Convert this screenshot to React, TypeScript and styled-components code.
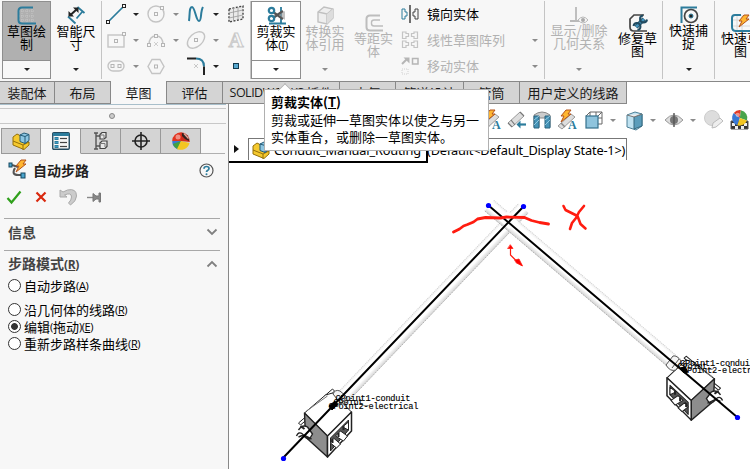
import React from 'react';
import styled, { createGlobalStyle, css } from 'styled-components';

const GlobalStyle = createGlobalStyle`
  * { box-sizing: border-box; }
  html, body { margin: 0; padding: 0; }
  body {
    width: 750px; height: 469px; overflow: hidden; background: #fff; color: #000;
    font: 13px/13px "Noto Sans CJK SC", "Open Sans", sans-serif;
  }
  svg { display: block; overflow: visible; flex: none; }
`;

const Window = styled.div`
  position: relative;
  display: flex;
  flex-direction: column;
  width: 750px;
  height: 469px;
  overflow: hidden;
`;

/* ---------- ribbon ---------- */
const Ribbon = styled.div`
  display: flex;
  flex: none;
  height: 81px;
  padding: 1px 0 2px 2px;
  background: #f7f7f7;
`;
const Separator = styled.div`
  flex: none;
  width: 1px;
  background: #c4c4c4;
`;
const ToolButton = styled.div<{ $w: number; $tone?: 'pressed' | 'hover'; $muted?: boolean }>`
  display: flex;
  flex: none;
  flex-direction: column;
  width: ${p => p.$w}px;
  height: 78px;
  color: ${p => (p.$muted ? '#b2b2b2' : '#000')};
  ${p => p.$tone && css`border: 1px solid #8e8e8e;`}
  ${p => !p.$tone && css`padding: 1px 0;`}
  ${p => p.$tone === 'hover' && css`background: #fff;`}
`;
const ToolFace = styled.div<{ $pressed?: boolean; $low?: boolean }>`
  display: flex;
  flex-direction: column;
  align-items: center;
  height: 58px;
  padding-top: ${p => (p.$low ? 12 : 4)}px;
  background: ${p => (p.$pressed ? '#b0b0b0' : 'transparent')};
`;
const ToolLabel = styled.div`
  margin-top: -1px;
  text-align: center;
  white-space: nowrap;
`;
const ToolDrop = styled.div<{ $line?: boolean }>`
  display: flex;
  flex: 1;
  align-items: center;
  justify-content: center;
  ${p => p.$line && css`border-top: 1px solid #8e8e8e;`}
`;
const Arrow = styled.i<{ $muted?: boolean }>`
  width: 0;
  height: 0;
  border: 3px solid transparent;
  border-bottom: 0;
  border-top-color: ${p => (p.$muted ? '#8b8b8b' : '#222')};
`;
const SketchGrid = styled.div`
  display: grid;
  flex: none;
  width: 148px;
  grid-template-columns: repeat(3, 40px) 28px;
  grid-template-rows: repeat(3, 26px);
`;
const SketchCell = styled.div`
  display: grid;
  grid-template-columns: 28px 11px;
  align-items: center;
  justify-items: center;
`;
const CommandList = styled.div`
  display: flex;
  flex: none;
  flex-direction: column;
  width: 146px;
`;
const Command = styled.div<{ $muted?: boolean }>`
  display: flex;
  align-items: center;
  height: 26px;
  padding: 0 6px 0 3px;
  color: ${p => (p.$muted ? '#b2b2b2' : '#000')};
`;
const CommandText = styled.span`
  flex: 1;
  margin-left: 8px;
  margin-top: -1px;
`;
const Key = styled.span<{ $tight?: boolean; $size?: number }>`
  font-family: "Open Sans", sans-serif;
  font-size: ${p => p.$size ?? 11}px;
  letter-spacing: ${p => (p.$tight ? '-1.3px' : '-0.4px')};
  font-weight: inherit;
  u { text-underline-offset: 1px; }
`;

/* ---------- ribbon tabs ---------- */
const TabStrip = styled.div`
  display: flex;
  flex: none;
  height: 23px;
`;
const Tab = styled.div<{ $w: number; $active?: boolean }>`
  display: flex;
  flex: none;
  align-items: center;
  justify-content: center;
  width: ${p => p.$w}px;
  padding-bottom: 1px;
  border: solid #888;
  border-width: ${p => (p.$active ? '0 1px 0 0' : '1px 1px 1px 0')};
  background: ${p => (p.$active ? '#f7f7f7' : '#d4d4d4')};
  white-space: pre;
  color: #1a1a1a;
`;
const TabLatin = styled.span`
  font: 12.5px/13px "Open Sans", sans-serif;
  letter-spacing: -0.5px;
`;
const TabFill = styled.div`
  flex: 1;
  border-top: 1px solid #888;
`;

/* ---------- property panel ---------- */
const Body = styled.div`
  display: flex;
  flex: 1;
  min-height: 0;
`;
const Panel = styled.div`
  display: flex;
  flex: none;
  flex-direction: column;
  width: 229px;
  border-right: 1px solid #888;
  background: #f7f7f7;
`;
const Grip = styled.div`
  display: flex;
  align-items: center;
  justify-content: center;
  height: 20px;
  margin-right: 2px;
  padding-top: 4px;
  border-top: 1px solid #a8bfcb;
  border-bottom: 1px solid #c8c8c8;
  background: linear-gradient(#c8c8c8, #c8c8c8) 0 3px / 100% 1px no-repeat;
`;
const GripDot = styled.i`
  width: 6px;
  height: 6px;
  margin-left: -2px;
  border: 1px solid #888;
  border-radius: 50%;
  background: #ccc;
`;
const PanelTabs = styled.div`
  display: flex;
  height: 26px;
  margin: 4px 3px 0 1px;
`;
const PanelTab = styled.div<{ $active?: boolean; $first?: boolean }>`
  display: flex;
  flex: none;
  align-items: center;
  justify-content: center;
  width: 40px;
  border: 1px solid #999;
  border-left-width: ${p => (p.$first ? 1 : 0)}px;
  border-bottom-color: ${p => (p.$active ? '#f7f7f7' : '#999')};
  background: ${p => (p.$active ? '#f7f7f7' : '#d4d4d4')};
`;
const PanelTabFill = styled.div`
  flex: 1;
  border-bottom: 1px solid #b0b0b0;
`;
const TitleRow = styled.div`
  display: flex;
  align-items: center;
  height: 32px;
  padding: 0 14px 0 8px;
`;
const Title = styled.div`
  flex: 1;
  margin-left: 7px;
  font-size: 14px;
  font-weight: 700;
  color: #222;
`;
const Actions = styled.div`
  display: flex;
  align-items: center;
  height: 22px;
  margin-bottom: 10px;
  padding-left: 6px;
`;
const Section = styled.div<{ $h: number }>`
  height: ${p => p.$h}px;
  margin: 0 8px 0 4px;
  border-top: 1px solid #a8a8a8;
`;
const SectionHead = styled.div`
  display: flex;
  align-items: center;
  justify-content: space-between;
  height: 26px;
  padding: 0 3px 0 4px;
  font-size: 14px;
  font-weight: 700;
  color: #444;
`;
const Option = styled.div<{ $gap?: number }>`
  display: flex;
  align-items: center;
  height: 17px;
  margin-top: ${p => p.$gap ?? 0}px;
  padding-left: 4px;
  white-space: nowrap;
`;
const Radio = styled.i<{ $on?: boolean }>`
  flex: none;
  width: 13px;
  height: 13px;
  margin-right: 3px;
  border: 1px solid #333;
  border-radius: 50%;
  background: ${p => (p.$on ? 'radial-gradient(circle, #333 3px, #fff 3.8px)' : '#fff')};
`;

/* ---------- graphics area ---------- */
const Viewport = styled.div`
  position: relative;
  flex: 1;
  min-width: 0;
  background: #fff;
`;
const Scene = styled.svg`
  position: absolute;
  left: 0;
  top: 0;
`;
const ViewTools = styled.div`
  display: flex;
  align-items: center;
  height: 32px;
  padding-left: 251px;
`;
const ViewSlot = styled.div<{ $w: number }>`
  display: flex;
  flex: none;
  justify-content: center;
  width: ${p => p.$w}px;
`;
const TreeRow = styled.div`
  display: flex;
  align-items: center;
  width: 199px;
  height: 27px;
  padding-left: 5px;
  border: solid #000;
  border-width: 0 2px 2px 0;
`;
const Expander = styled.i`
  flex: none;
  margin-right: 9px;
  border: 4px solid transparent;
  border-left: 5px solid #111;
  border-right: 0;
`;
const TreeBox = styled.div`
  display: flex;
  flex: none;
  align-items: center;
  align-self: flex-start;
  width: 379px;
  height: 22px;
  margin-top: 2px;
  padding-left: 3px;
  border: 1px solid #777;
  border-bottom: 0;
  white-space: nowrap;
`;
const TreeName = styled.span<{ $w: number }>`
  flex: none;
  width: ${p => p.$w}px;
  padding-left: 4px;
  font: 12.8px/20px "Noto Sans", sans-serif;
  letter-spacing: -0.2px;
`;

const Tooltip = styled.div`
  position: absolute;
  left: 264px;
  top: 89px;
  width: 225px;
  height: 62px;
  padding: 4px 6px;
  border: 1px solid #b0b0b0;
  background: #fff;
  line-height: 17px;
  white-space: nowrap;
  &::before {
    content: '';
    position: absolute;
    left: 15px;
    top: -5px;
    width: 9px;
    height: 9px;
    border: solid #b0b0b0;
    border-width: 1px 0 0 1px;
    background: #fff;
    transform: rotate(45deg);
  }
`;
const TooltipTitle = styled.div`
  height: 18px;
  margin-top: -1px;
  font-weight: 700;
`;

/* ---------- icons ---------- */
const BLUE = '#2c7c9c';
const GREY = '#c4c4c4';
type IconProps = { w?: number; h?: number; s?: string; children: React.ReactNode };
const Icon = ({ w = 18, h = 18, s = '#333', children }: IconProps) => (
  <svg width={w} height={h} viewBox={`0 0 ${w} ${h}`} fill="none" stroke={s} strokeWidth={1.4}>{children}</svg>
);
const Node = ({ x, y, c = '#222' }: { x: number; y: number; c?: string }) => (
  <rect x={x - 1.5} y={y - 1.5} width={3} height={3} fill="#f7f7f7" stroke={c} strokeWidth={1} />
);

const SketchIcon = () => (
  <Icon w={20} h={19}>
    <path d="M5 1v15M10 1v16M15 1v16M2 5h16M2 10h16M2 14h16" stroke="#c6c6c6" strokeWidth={1} strokeDasharray="1 1" />
    <path d="M16 1.5H5Q1.5 1.5 1.5 5v9q0 3.500 3.500 3.500h14" stroke={BLUE} strokeWidth={2} />
  </Icon>
);
const DimensionIcon = () => (
  <Icon w={18} h={19}>
    <path d="M10.500 1l7 6M1 10.500l7.500 7M15.500 5.500l-6 7" stroke={BLUE} strokeWidth={1.8} />
    <path d="M3.500 9l6-5.500" stroke="#222" strokeWidth={2} />
    <path d="M1.500 10.500V5l5.500 5.500zM11.500 1.500V7L6 1.500z" fill="#222" stroke="none" />
  </Icon>
);
const LineIcon = () => <Icon w={20} h={20}><path d="M2.500 17.500L17.500 2.500" stroke={BLUE} strokeWidth={1.7} /><Node x={2} y={18} /><Node x={18} y={2} /></Icon>;
const CircleIcon = () => <Icon s={GREY}><circle cx={9} cy={9} r={8} /><Node x={9} y={9} c="#b5b5b5" /><Node x={15} y={3} c="#b5b5b5" /></Icon>;
const SplineIcon = () => <Icon w={16}><path d="M1 16C2 9 1 2 4 2s4 14 7 14 1-9 4-14" stroke={BLUE} strokeWidth={2} /></Icon>;
const PlaneIcon = () => (
  <Icon w={16} s="#444"><path d="M1 4L15 1v13L1 17z" strokeDasharray="2 1.500" fill="#e9e9e9" /><path d="M5.500 3v13M10 2v13M1 8l14-3M1 13l14-3" stroke="#999" strokeWidth={0.8} /></Icon>
);
const RectIcon = () => <Icon w={19} h={16} s={GREY}><rect x={1} y={3} width={16} height={12} /><Node x={9} y={9} c="#b5b5b5" /><Node x={17} y={2} c="#b5b5b5" /></Icon>;
const ArcIcon = () => <Icon h={14} s={GREY}><path d="M2 12Q2 3 9 3t7 9" /><path d="M7 9l4 4m0-4l-4 4" strokeWidth={0.8} /><Node x={2} y={12} c="#b5b5b5" /><Node x={16} y={12} c="#b5b5b5" /><Node x={9} y={3} c="#b5b5b5" /></Icon>;
const EllipseIcon = () => <Icon s={GREY}><ellipse cx={9} cy={9} rx={10} ry={6.500} transform="rotate(-42 9 9)" /><Node x={9} y={9} c="#b5b5b5" /></Icon>;
const GlyphA = styled.span`
  font: 700 21px/22px "Liberation Serif", serif;
  color: #f7f7f7;
  -webkit-text-stroke: 1px #c8c8c8;
`;
const SlotIcon = () => <Icon w={18} h={12} s={GREY}><rect x={1} y={1} width={16} height={10} rx={5} /><Node x={5.500} y={6} c="#b5b5b5" /><Node x={12.500} y={6} c="#b5b5b5" /></Icon>;
const PolygonIcon = () => <Icon w={18} h={17} s={GREY}><path d="M5 1.500h8l4 7-4 7H5l-4-7z" /><Node x={9} y={8.500} c="#b5b5b5" /></Icon>;
const FilletIcon = () => (
  <Icon w={19}><path d="M0 1.500h9" stroke="#222" strokeWidth={2} /><path d="M9 1.500q8 0 8 8" stroke={BLUE} strokeWidth={2} /><path d="M17 9.500V18" stroke="#222" strokeWidth={2} /><path d="M7 7l4 4m0-4l-4 4" stroke="#bbb" strokeWidth={0.8} /></Icon>
);
const PointIcon = () => <Icon w={6} h={6}><rect x={0.500} y={0.500} width={5} height={5} fill="#58a8cf" stroke="#123a4e" strokeWidth={1} /></Icon>;
const TrimIcon = () => (
  <Icon w={19} h={19}>
    <path d="M2 17.500h17M14 1v17" stroke={BLUE} strokeWidth={1.8} />
    <path d="M6 6l10 7M6 12l10-7" stroke="#555" strokeWidth={2.400} />
    <path d="M12 9l6-4v9z" fill="#999" stroke="none" opacity={0.6} />
    <circle cx={4.500} cy={4.500} r={2.700} stroke={BLUE} strokeWidth={2.200} /><circle cx={4.500} cy={12.500} r={2.700} stroke={BLUE} strokeWidth={2.200} />
  </Icon>
);
const CubeIcon = () => (
  <Icon w={17} h={19} s="#c0c0c0"><path d="M1 6l6-5 9 2v9l-6 6-9-2z" fill="#eee" /><path d="M1 6l9 2 6-5M10 8v10" /><path d="M10 8l6-5v9l-6 6z" fill="#ddd" stroke="none" /></Icon>
);
const OffsetIcon = () => <Icon w={18} h={18} s="#bdbdbd"><path d="M15 1.500H5Q1.500 1.500 1.500 5v8q0 3.500 3.500 3.500h13" strokeWidth={2} /><path d="M15 6H9q-2.500 0-2.500 2.500v1Q6.500 12 9 12h9" /></Icon>;
const MirrorIcon = () => (
  <Icon w={18} h={18}><path d="M9 0v18" stroke="#333" /><path d="M1 4v10h3v-3h2V7H4V4z" stroke={BLUE} strokeWidth={1} /><path d="M17 4v10h-3v-3h-2V7h2V4z" stroke="#444" strokeWidth={1} /></Icon>
);
const PatternIcon = () => (
  <Icon w={18} h={18} s={GREY}>
    {[[0, 0], [0, 9]].map(([x, y]) => (
      <g key={y} transform={`translate(${x} ${y})`} strokeWidth={1.2}>
        <path d="M1.500 1v6.500h3.500v-2h2.500v-3H5V1z" />
        <path d="M16.500 1v6.500H13v-2h-2.500v-3H13V1z" />
      </g>
    ))}
  </Icon>
);
const MoveIcon = () => (
  <Icon w={18} h={18} s="#b5b5b5"><path d="M1 7l5-5" strokeWidth={2} /><path d="M2.500 0.500h6v6z" fill="#b5b5b5" stroke="none" /><rect x={11.500} y={1.500} width={5.500} height={5.500} strokeWidth={1.5} /><rect x={1} y={12} width={6} height={5} stroke="#d0d0d0" strokeDasharray="1 1" strokeWidth={1} /></Icon>
);
const RelationIcon = () => (
  <Icon w={19} h={18} s="#b9b9b9"><path d="M6 1v14M0 15h10" strokeWidth={1.8} /><path d="M8 14q5-6 10 0-5 6-10 0z" fill="#f7f7f7" strokeWidth={1} /><circle cx={13} cy={14} r={2} fill="#aaa" stroke="none" /></Icon>
);
const RepairIcon = () => (
  <Icon w={18} h={18}><path d="M15 1H5L1 5v8q0 4 4 4h13" stroke="#444" strokeWidth={1.7} /><path d="M7 13l8-8" stroke="#214b61" strokeWidth={4.500} /><path d="M7 13l8-8" stroke="#4594bc" strokeWidth={2.500} /><path d="M14 1.500a3.500 3.500 0 1 0 4 4M4.500 12a3.500 3.500 0 1 1 4 4" stroke="#214b61" strokeWidth={2} /></Icon>
);
const SnapIcon = () => <Icon w={18} h={18}><path d="M1.500 17V1.500H17" stroke={BLUE} strokeWidth={2} /><circle cx={11} cy={10} r={6.500} stroke="#444" strokeWidth={1.7} /><circle cx={11} cy={10} r={2} fill="#222" stroke={BLUE} strokeWidth={1} /></Icon>;
const Bolt = ({ t }: { t?: string }) => <path transform={t} d="M6 0h5L8 4h3L1 12l3-6H1z" fill="#ffb631" stroke="#b4521b" strokeWidth={1} />;
const RapidIcon = () => (
  <Icon w={20} h={18}><path d="M6 1v16M11 1v16M2 6h18M2 12h18" stroke="#d0d0d0" strokeWidth={0.8} /><path d="M10 1H4Q1 1 1 4v9q0 4 4 4h15" stroke={BLUE} strokeWidth={2} /><Bolt t="translate(7 1)" /></Icon>
);
const PartIcon = () => (
  <Icon w={18} h={18}><path d="M1 9V5l4-3 4 2v4l8 2v3l-5 4.500L1 13z" fill="#f5c92e" stroke="#94700b" strokeWidth={1} /><path d="M1 9l10 4 6-3M11 13v5" stroke="#94700b" strokeWidth={1} /><path d="M8 3l4-2 5 1.500v6l-4 3-5-2z" fill="#8dc6e2" stroke="#245b77" strokeWidth={1} /><path d="M8 3l5 1.500L17 2.500M13 4.500v7" stroke="#245b77" strokeWidth={1} /></Icon>
);
const PropertiesIcon = () => (
  <Icon w={18} h={18}><rect x={0.750} y={0.750} width={16.500} height={16.500} rx={1} stroke="#244b60" /><path d="M1 2.500h16" stroke={BLUE} strokeWidth={3} />{[6, 10, 14].map(y => <g key={y}><rect x={3} y={y - 0.500} width={3} height={2} fill="#3e9bc5" stroke={BLUE} strokeWidth={1} /><path d={`M8 ${y + 0.500}h7`} stroke="#444" strokeWidth={1.2} /></g>)}</Icon>
);
const ConfigIcon = () => (
  <Icon w={15} h={18}><path d="M3 1v16M3 4h5M3 14h5M1 1h4M1 17h4" stroke="#555" /><path d="M7 2.500l2-2h4v5l-2 1.500H7zM7 11l2-2h5v5.500l-2 2H7z" fill="#e8e8e8" stroke="#444" strokeWidth={1.2} /><path d="M8 3h3v3M8 11.500h4V15" stroke="#777" strokeWidth={1} /></Icon>
);
const TargetIcon = () => <Icon><circle cx={9} cy={9} r={6} stroke="#222" strokeWidth={1.6} /><path d="M9 0v18M0 9h18" stroke="#222" strokeWidth={1.6} /></Icon>;
const Ball = ({ t }: { t?: string }) => (
  <g transform={t} stroke="none"><path d="M9 9L2 3.500A9 9 0 0 1 10 .2z" fill="#e33a28" /><path d="M9 9L10 .2A9 9 0 0 1 17 12z" fill="#49a44a" /><path d="M9 9L2 3.500A9 9 0 0 0 6 17.400z" fill="#3978d4" /><path d="M9 9l8 3a9 9 0 0 1-11 5.400z" fill="#f3c623" /><circle cx={6.500} cy={5.500} r={2.500} fill="#fff" opacity={0.45} /></g>
);
const AppearanceIcon = () => (
  <Icon>
    <g stroke="none">
      <path d="M9 9L9 .2A9 9 0 0 0 .2 9z" fill="#e2331f" /><path d="M9 9H.2A9 9 0 0 0 5 17z" fill="#3978d4" />
      <path d="M9 9L.8 12A9 9 0 0 0 6 17.400z" fill="#43a13f" /><path d="M9 9l-4 8a9 9 0 0 0 12.500-6z" fill="#f3c623" />
      <path d="M9 .2A9 9 0 0 1 17.800 10L9 9z" fill="#cf2d1c" /><path d="M10 1q7 1 7 8-4-1-7-5z" fill="#33211d" />
      <circle cx={6} cy={5} r={2.500} fill="#fff" opacity={0.45} />
    </g>
    <path d="M12 1.500l4.500 5" stroke="#e7a597" />
  </Icon>
);
const RouteIcon = () => (
  <Icon><path d="M4 4l6 2M7 7Q3 14 10 14h4" stroke="#555" strokeWidth={2} /><rect x={1} y={2} width={3} height={4} fill="#49a4cd" stroke="#164961" strokeWidth={1} /><rect x={13} y={12} width={4} height={5} fill="#49a4cd" stroke="#164961" strokeWidth={1} /><Bolt t="translate(7 -1)" /></Icon>
);
const HelpIcon = () => <Icon w={15} h={15}><circle cx={7.500} cy={7.500} r={6.500} stroke="#555" strokeWidth={1.2} /><path d="M5 5.800q0-2.300 2.500-2.300T10 5.500q0 1.200-1.500 2-1 .7-1 1.500" stroke={BLUE} strokeWidth={1.700} /><circle cx={7.500} cy={11.300} r={1} fill={BLUE} stroke="none" /></Icon>;
const CheckIcon = () => <Icon w={16} h={14}><path d="M1.500 8l4 4.500L14.500 1.500" stroke="#30a01c" strokeWidth={2.200} /></Icon>;
const CloseIcon = () => <Icon w={12} h={12}><path d="M1.500 1.500l9 9M10.500 1.500l-9 9" stroke="#d9280e" strokeWidth={2.200} /></Icon>;
const UndoIcon = () => <Icon w={18} h={16}><path d="M1 1v7h7L5.500 6q7-3 7 2 0 3-3 6l2 2q6-4 6-9 0-8-9-6L4 3z" fill="#ccc" stroke="#aaa" strokeWidth={1} /></Icon>;
const PinIcon = () => <Icon w={15} h={11}><path d="M0 5.500h6" stroke="#888" /><path d="M6 1.500L9 4h3V1h1.500v9H12V7H9l-3 2.500z" fill="#888" stroke="#777" strokeWidth={1} /></Icon>;
const Chevron = ({ up }: { up?: boolean }) => <Icon w={10} h={6}><path d={up ? 'M.5 5.500L5 1l4.500 4.500' : 'M.5 .5L5 5 9.500 .5'} stroke="#808080" strokeWidth={1.800} /></Icon>;
const ScopeIcon = () => <Icon w={19}><path d="M1 12L13 1l4 4L5 16z" fill="#ddd" stroke="#999" strokeWidth={1} /><path d="M1 12l4 4M4 9l4 5M13 1l4 4" stroke="#777" strokeWidth={1.2} /><path d="M19 13.500h-6" stroke={BLUE} strokeWidth={2.200} /><path d="M9.500 13.500l4-4v8z" fill={BLUE} stroke="none" /></Icon>;
const SectionViewIcon = () => <Icon><path d="M1 4q8-6 16 0v12h-4V7H6v9H1z" fill="#ccc" stroke="#888" strokeWidth={1} /><path d="M1 5h5v12H1zM12 5h5v12h-5z" fill="#4593b7" stroke="#28627e" strokeWidth={1} /><path d="M1 9l5-4M1 14l5-5M12 9l5-4M12 14l5-5" stroke="#a8d7eb" strokeWidth={0.8} /></Icon>;
const SmallA = styled.text`font: 700 12px "Liberation Serif", serif; fill: #2c7c9c; stroke: none;`;
const AnnotateIcon = () => <Icon w={19}><path d="M0 15L13 3l4 3L4 18z" fill="#ddd" stroke="#999" strokeWidth={1} /><Bolt t="translate(2 -1)" /><path d="M3 12l4 4" stroke="#888" /><SmallA x={10} y={18}>A</SmallA></Icon>;
const OrientIcon = () => <Icon><path d="M5 1h12v12h-4M5 1v4M11 1v4M13 7h4M17 1l-4 4M5 1L1 5" stroke="#666" strokeWidth={1} /><rect x={1} y={5} width={12} height={12} fill="#8fc4dd" stroke="#35718d" strokeWidth={1.2} /></Icon>;
const DisplayIcon = () => <Icon w={17} h={19}><path d="M1 4l8-3 7 2v12l-6 4-9-3z" fill="#bfe2f1" stroke="#4c7f96" strokeWidth={1} /><path d="M8 6l8-3v12l-8 3z" fill="#5b9dbb" stroke="#35697f" strokeWidth={1} /><path d="M1 4l7 2 8-3" fill="#eee" stroke="#777" strokeWidth={1} /></Icon>;
const EyeIcon = () => <Icon w={18} h={16}><path d="M0 8q9-10 18 0-9 10-18 0z" fill="#ddd" stroke="#999" strokeWidth={1} /><circle cx={9} cy={8} r={4} fill="#777" stroke="none" /><path d="M9 1v14" stroke="#555" /></Icon>;
const EditLookIcon = () => <Icon w={19}><circle cx={8} cy={7} r={7.500} fill="#ddd" stroke="#ccc" strokeWidth={1} /><path d="M8 17l1-5 7-5 3 3-7 6z" fill="#eee" stroke="#bbb" strokeWidth={1} /></Icon>;
const SceneIcon = () => <Icon w={19} h={20}><path d="M1 11h17v8H1z" fill="#333" stroke="#555" strokeWidth={1} /><path d="M2 13h3v3H2zM14 13h3v3h-3zM5 16h3v3H5zM11 16h3v3h-3z" fill="#eee" stroke="none" /><Ball t="translate(2 0) scale(.88)" /></Icon>;

const SKETCH_CELLS: [React.ReactNode, 'dark' | 'muted' | null][] = [
  [<LineIcon />, 'dark'], [<CircleIcon />, 'muted'], [<SplineIcon />, 'dark'], [<PlaneIcon />, null],
  [<RectIcon />, 'muted'], [<ArcIcon />, 'muted'], [<EllipseIcon />, 'muted'], [<GlyphA>A</GlyphA>, null],
  [<SlotIcon />, 'muted'], [<PolygonIcon />, null], [<FilletIcon />, 'dark'], [<PointIcon />, null],
];

const VIEW_TOOLS: [number, React.ReactNode][] = [
  [22, <AnnotateIcon />], [28, <ScopeIcon />], [24, <SectionViewIcon />], [26, <AnnotateIcon />],
  [28, <OrientIcon />], [10, <Arrow $muted />], [32, <DisplayIcon />], [6, <Arrow $muted />],
  [35, <EyeIcon />], [4, <Arrow $muted />], [37, <EditLookIcon />], [14, <SceneIcon />],
];

type ToolProps = {
  w: number; icon: React.ReactNode; lines: React.ReactNode[]; tone?: 'pressed' | 'hover';
  muted?: boolean; drop?: boolean;
};
const Tool = ({ w, icon, lines, tone, muted, drop = true }: ToolProps) => (
  <ToolButton $w={w} $tone={tone} $muted={muted}>
    <ToolFace $pressed={tone === 'pressed'} $low={!drop}>
      {icon}
      <ToolLabel>{lines.map((l, i) => <div key={i}>{l}</div>)}</ToolLabel>
    </ToolFace>
    {drop && <ToolDrop $line={!!tone}><Arrow $muted={muted} /></ToolDrop>}
  </ToolButton>
);

const PointLabel = styled.text`
  font: 8.6px "Liberation Mono", monospace;
  fill: #000;
  stroke: #000;
  stroke-width: 0.15px;
`;

/* Junction box: top face, shaded side, open side with ribs, mounting tabs. */
const JunctionBox = () => (
  <g stroke="#222" strokeWidth={1} strokeLinejoin="round">
    <path d="M-1 22l7-6 2 2-7 6zM25-5l8-7 2 2-7 7z" fill="#fff" />
    <path d="M5 12L26-6l7-2 19 19-24 24z" fill="#fff" />
    <path d="M7 10L28-5M31 33l20-19" stroke="#777" />
    <path d="M5 12l23 23v21L6 36z" fill="#8d8d8d" strokeWidth={1.4} />
    <path d="M28 35l24-24v19L28 56z" fill="#fff" strokeWidth={1.5} />
    <path d="M31 37l18-18v10L31 50z" fill="#555" />
    <path d="M31 42l6 5 4-4-7-6zM36 35l8 5 4-5-7-5zM43 26l6 3v-8z" fill="#fff" />
    <path d="M33 38v4M39 32v4M44 25v4" strokeWidth={2} />
    <path d="M-1 36l5-2 8 4M-1 29q4-6 9-3l5 7-3 5q-4 0-7-5-4-3-6 2" fill="#fff" strokeWidth={1.4} />
    <path d="M1 25l4 3" strokeWidth={2} />
  </g>
);

const Pipe = ({ t, length, top, bottom }: { t: string; length: number; top: number; bottom: number }) => (
  <g transform={t}>
    <rect x={0} y={-top} width={length} height={top + bottom} fill="url(#pipe)" />
    <path d={`M0 ${-top}h${length}`} stroke="#d0d0d0" strokeDasharray="1 1" />
    <path d={`M0 ${bottom}h${length}`} stroke="#aaa" strokeWidth={0.8} strokeDasharray="2 1" />
  </g>
);

const Model = () => (
  <Scene width={521} height={365} viewBox="229 104 521 365" fill="none">
    <defs>
      <linearGradient id="pipe" x1="0" x2="0" y1="0" y2="1">
        <stop offset="0" stopColor="#f0f0f0" /><stop offset=".2" stopColor="#fff" />
        <stop offset=".68" stopColor="#fff" /><stop offset="1" stopColor="#d4d4d4" />
      </linearGradient>
    </defs>
    <Pipe t="translate(336 402.500) rotate(-46.300)" length={270} top={5.500} bottom={8} />
    <Pipe t="translate(489 206) rotate(40.400)" length={246} top={7.500} bottom={6.500} />
    <path d="M499 220l9-9 10 11-9 7z" fill="#fff" />
    <g transform="translate(299.500 401)"><JunctionBox /></g>
    <g transform="translate(719.500 367.500) scale(-1.010 .94)"><JunctionBox /></g>
    <g stroke="#555" strokeWidth={1} fill="#f4f4f4">
      <path d="M333 394q2-5 7-3l7 6-6 7z" /><path d="M666 365l7-9q4-1 8 5l-5 9q-6 2-10-5z" /><path d="M672 368l7-9" />
    </g>
    <path d="M283 458L524 206M488 205L737 417" stroke="#000" strokeWidth={2} />
    <path d="M329 406l6-5 2 4-5 5zM680 368l5-1 3 5-4 1z" fill="#000" stroke="#000" />
    <PointLabel x={335.500} y={401} textLength={75}>CPoint1-conduit</PointLabel>
    <PointLabel x={333.500} y={405} textLength={35}>CPoint_</PointLabel>
    <PointLabel x={328.500} y={408.500} textLength={90}>CPoint2-electrical</PointLabel>
    <PointLabel x={680} y={365.500} textLength={75}>CPoint1-conduit</PointLabel>
    <PointLabel x={677.500} y={369} textLength={35}>CPoint_</PointLabel>
    <PointLabel x={682} y={372.500} textLength={90}>CPoint2-electrical</PointLabel>
    <g fill="#00f"><circle cx={283.500} cy={458.500} r={2.600} /><circle cx={488.500} cy={205.500} r={2.600} /><circle cx={523.500} cy={206.500} r={2.600} /><circle cx={737.500} cy={417.500} r={2.600} /></g>
    <g stroke="#ff1c10" strokeLinecap="round" strokeLinejoin="round">
      <path d="M453.500 232l6-3 4-3 4-1.500 6-2.500 4-3 8-1.500 15 .5 6-1 18 .5 7 3 8 2 9 1.500" strokeWidth={2.800} />
      <path d="M563.500 206l2 4 6 3 6 3 3 8 5 4.500M584 206l-5 6-3 6-4 5-2 6" strokeWidth={2.600} />
      <path d="M510.500 247v8l5 5 6 5" strokeWidth={1.200} />
      <path d="M508 248.500h5l-2.500-3.500zM515 260l4-1 3.500 7-6-3z" fill="#f00" strokeWidth={0.8} />
    </g>
  </Scene>
);

export default function App() {
  return (
    <Window>
      <GlobalStyle />
      <Ribbon>
        <Tool w={49} icon={<SketchIcon />} lines={['草图绘', '制']} tone="pressed" />
        <Tool w={50} icon={<DimensionIcon />} lines={['智能尺', '寸']} />
        <Separator />
        <SketchGrid>
          {SKETCH_CELLS.map(([icon, arrow], i) => (
            <SketchCell key={i}>{icon}{arrow && <Arrow $muted={arrow === 'muted'} />}</SketchCell>
          ))}
        </SketchGrid>
        <Separator />
        <Tool w={50} icon={<TrimIcon />} lines={['剪裁实', <>体<Key $tight>(<u>T</u>)</Key></>]} tone="hover" />
        <Tool w={48} icon={<CubeIcon />} lines={['转换实', '体引用']} muted />
        <Tool w={49} icon={<OffsetIcon />} lines={['等距实', '体']} muted drop={false} />
        <CommandList>
          <Command><MirrorIcon /><CommandText>镜向实体</CommandText></Command>
          <Command $muted><PatternIcon /><CommandText>线性草图阵列</CommandText><Arrow $muted /></Command>
          <Command $muted><MoveIcon /><CommandText>移动实体</CommandText><Arrow $muted /></Command>
        </CommandList>
        <Separator />
        <Tool w={68} icon={<RelationIcon />} lines={['显示/删除', '几何关系']} muted />
        <Tool w={49} icon={<RepairIcon />} lines={['修复草', '图']} drop={false} />
        <Separator />
        <Tool w={51} icon={<SnapIcon />} lines={['快速捕', '捉']} />
        <Separator />
        <Tool w={51} icon={<RapidIcon />} lines={['快速草', '图']} drop={false} />
      </Ribbon>
      <TabStrip>
        <Tab $w={55}>装配体</Tab>
        <Tab $w={56}>布局</Tab>
        <Tab $w={56} $active>草图</Tab>
        <Tab $w={56}>评估</Tab>
        <Tab $w={117}><TabLatin>SOLIDWORKS </TabLatin>插件</Tab>
        <Tab $w={56}>电气</Tab>
        <Tab $w={68}>管道设计</Tab>
        <Tab $w={56}>管筒</Tab>
        <Tab $w={107}>用户定义的线路</Tab>
        <TabFill />
      </TabStrip>
      <Body>
        <Panel>
          <Grip><GripDot /></Grip>
          <PanelTabs>
            <PanelTab $first><PartIcon /></PanelTab>
            <PanelTab $active><PropertiesIcon /></PanelTab>
            <PanelTab><ConfigIcon /></PanelTab>
            <PanelTab><TargetIcon /></PanelTab>
            <PanelTab><AppearanceIcon /></PanelTab>
            <PanelTabFill />
          </PanelTabs>
          <TitleRow><RouteIcon /><Title>自动步路</Title><HelpIcon /></TitleRow>
          <Actions>
            <ViewSlot $w={16}><CheckIcon /></ViewSlot>
            <ViewSlot $w={38}><CloseIcon /></ViewSlot>
            <ViewSlot $w={16}><UndoIcon /></ViewSlot>
            <ViewSlot $w={36}><PinIcon /></ViewSlot>
          </Actions>
          <Section $h={32}>
            <SectionHead>信息<Chevron /></SectionHead>
          </Section>
          <Section $h={110}>
            <SectionHead><span>步路模式<Key $size={12}>(<u>R</u>)</Key></span><Chevron up /></SectionHead>
            <Option><Radio />自动步路<Key>(<u>A</u>)</Key></Option>
            <Option $gap={7}><Radio />沿几何体的线路<Key>(<u>R</u>)</Key></Option>
            <Option><Radio $on />编辑<Key>(</Key>拖动<Key>)(<u>E</u>)</Key></Option>
            <Option><Radio />重新步路样条曲线<Key>(<u>R</u>)</Key></Option>
          </Section>
        </Panel>
        <Viewport>
          <Model />
          <ViewTools>
            {VIEW_TOOLS.map(([w, icon], i) => <ViewSlot key={i} $w={w}>{icon}</ViewSlot>)}
          </ViewTools>
          <TreeRow>
            <Expander />
            <TreeBox>
              <PartIcon />
              <TreeName $w={153}>Conduit_Manual_Routing</TreeName>
              <TreeName $w={202}>(Default&lt;Default_Display State-1&gt;)</TreeName>
            </TreeBox>
          </TreeRow>
        </Viewport>
      </Body>
      <Tooltip>
        <TooltipTitle>剪裁实体(<u>T</u>)</TooltipTitle>
        <div>剪裁或延伸一草图实体以使之与另一</div>
        <div>实体重合，或删除一草图实体。</div>
      </Tooltip>
    </Window>
  );
}
